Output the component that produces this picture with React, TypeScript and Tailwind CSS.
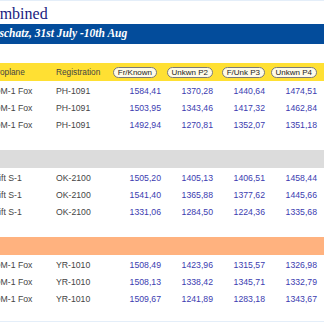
const groups = [
  {
    band: "bg-[#ffe033]",
    header: true,
    plane: "MDM-1 Fox",
    reg: "PH-1091",
    rows: [
      ["1584,41", "1370,28", "1440,64", "1474,51"],
      ["1503,95", "1343,46", "1417,32", "1462,84"],
      ["1492,94", "1270,81", "1352,07", "1351,18"],
    ],
  },
  {
    band: "bg-[#dcdcdc]",
    header: false,
    plane: "Swift S-1",
    reg: "OK-2100",
    rows: [
      ["1505,20", "1405,13", "1406,51", "1458,44"],
      ["1541,40", "1365,88", "1377,62", "1445,66"],
      ["1331,06", "1284,50", "1224,36", "1335,68"],
    ],
  },
  {
    band: "bg-[#ffb27f]",
    header: false,
    plane: "MDM-1 Fox",
    reg: "YR-1010",
    rows: [
      ["1508,49", "1423,96", "1315,57", "1326,98"],
      ["1508,13", "1338,42", "1345,71", "1332,79"],
      ["1509,67", "1241,89", "1283,18", "1343,67"],
    ],
  },
];

const cols = "grid grid-cols-[69px_60px_45px_52px_52px_52px_1fr] pl-[47px]";

function Pill({ label, extra = "" }: { label: string; extra?: string }) {
  return (
    <div className={`flex justify-end items-center ${extra}`}>
      <span className="rounded-full border border-[#7a7a7a] bg-[#fffbe8] px-[4px] text-[8px] leading-[9px] text-[#222]">
        {label}
      </span>
    </div>
  );
}

export default function App() {
  return (
    <div className="w-[324px] h-[323px] overflow-hidden bg-white" style={{ fontFamily: '"Liberation Sans", Arial, sans-serif' }}>
      <div className="ml-[-60px] w-[384px] h-[322px] border-y border-[#e4eef9] flex flex-col">
        {/* title */}
        <div
          className="h-[23px] pl-[41px] pt-[5px] text-[16px] leading-[16px] text-[#1a1a80]"
          style={{ fontFamily: '"Liberation Serif", "Times New Roman", serif' }}
        >
          Combined
        </div>
        <div
          className="h-[20px] bg-[#034c9b] pl-[41px] pt-[1px] text-[11.5px] leading-[16px] font-bold italic text-white"
          style={{ fontFamily: '"Liberation Serif", "Times New Roman", serif' }}
        >
          Leuschatz, 31st July -10th Aug
        </div>
        <div className="h-[19px]" />

        {groups.map((g, gi) => (
          <div key={gi} className="flex flex-col">
            <div className={`${g.band} h-[18px] ${cols} items-center text-[8.3px] text-[#444]`}>
              {g.header && (
                <>
                  <div>Aeroplane</div>
                  <div>Registration</div>
                  <Pill label="Fr/Known" extra="mr-[4px]" />
                  <Pill label="Unkwn P2" />
                  <Pill label="F/Unk P3" />
                  <Pill label="Unkwn P4" />
                </>
              )}
            </div>
            {g.rows.map((r, ri) => (
              <div key={ri} className={`${cols} h-[17px] pt-[4px] text-[8.7px] leading-[13px]`}>
                <div className="text-[#454545] whitespace-nowrap">{g.plane}</div>
                <div className="text-[#454545]">{g.reg}</div>
                {r.map((v, vi) => (
                  <div key={vi} className="text-right text-[#3c3cb0]">
                    {v}
                  </div>
                ))}
              </div>
            ))}
            <div className={gi === groups.length - 1 ? "h-[14px]" : "h-[18px]"} />
          </div>
        ))}
      </div>
    </div>
  );
}
